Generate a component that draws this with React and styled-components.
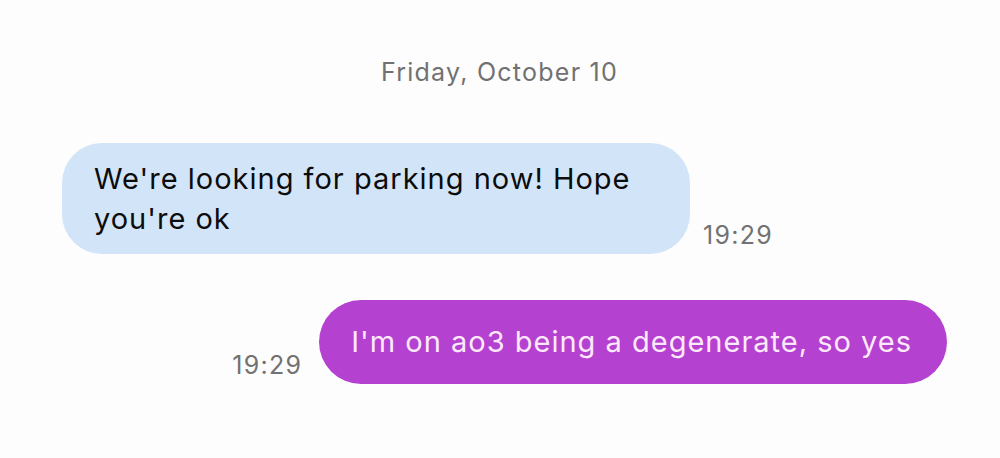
import React from "react";
import styled, { createGlobalStyle } from "styled-components";

const Global = createGlobalStyle`
  html, body { margin: 0; padding: 0; background: #fdfdfd; }
  body { font-family: Inter, "Noto Sans", "Liberation Sans", sans-serif; }
`;

const Screen = styled.div`
  width: 1000px;
  height: 458px;
  box-sizing: border-box;
  padding: 56px 53px 0 62px;
  display: flex;
  flex-direction: column;
  background: #fdfdfd;
`;

const DateLabel = styled.div`
  text-align: center;
  font-size: 25px;
  line-height: 32px;
  color: #717171;
  letter-spacing: 1.25px;
  padding-right: 10px;
  margin-bottom: 55px;
`;

const Row = styled.div`
  display: flex;
  align-items: flex-end;
  justify-content: ${(p) => (p.$out ? "flex-end" : "flex-start")};
  gap: ${(p) => (p.$out ? "17px" : "13px")};
  margin-bottom: ${(p) => p.$mb || 0}px;
`;

const Bubble = styled.div`
  box-sizing: border-box;
  width: ${(p) => (p.$out ? "auto" : "628px")};
  padding: ${(p) => (p.$out ? "22px 35px 22px 32px" : "16px 32px 15px 32px")};
  border-radius: ${(p) => (p.$out ? "42px" : "40px")};
  background: ${(p) => (p.$out ? "#b441cf" : "#d2e4f8")};
  color: ${(p) => (p.$out ? "#fde9fb" : "#0c0c0c")};
  font-size: 29px;
  line-height: 40px;
  letter-spacing: 1px;
`;

const Time = styled.div`
  font-size: 25px;
  line-height: 30px;
  color: #727272;
  letter-spacing: 1.3px;
  padding-bottom: 4px;
`;

export default function App() {
  return (
    <>
      <Global />
      <Screen>
        <DateLabel>Friday, October 10</DateLabel>
        <Row $mb={46}>
          <Bubble>We're looking for parking now! Hope you're ok</Bubble>
          <Time>19:29</Time>
        </Row>
        <Row $out>
          <Time>19:29</Time>
          <Bubble $out>I'm on ao3 being a degenerate, so yes</Bubble>
        </Row>
      </Screen>
    </>
  );
}
